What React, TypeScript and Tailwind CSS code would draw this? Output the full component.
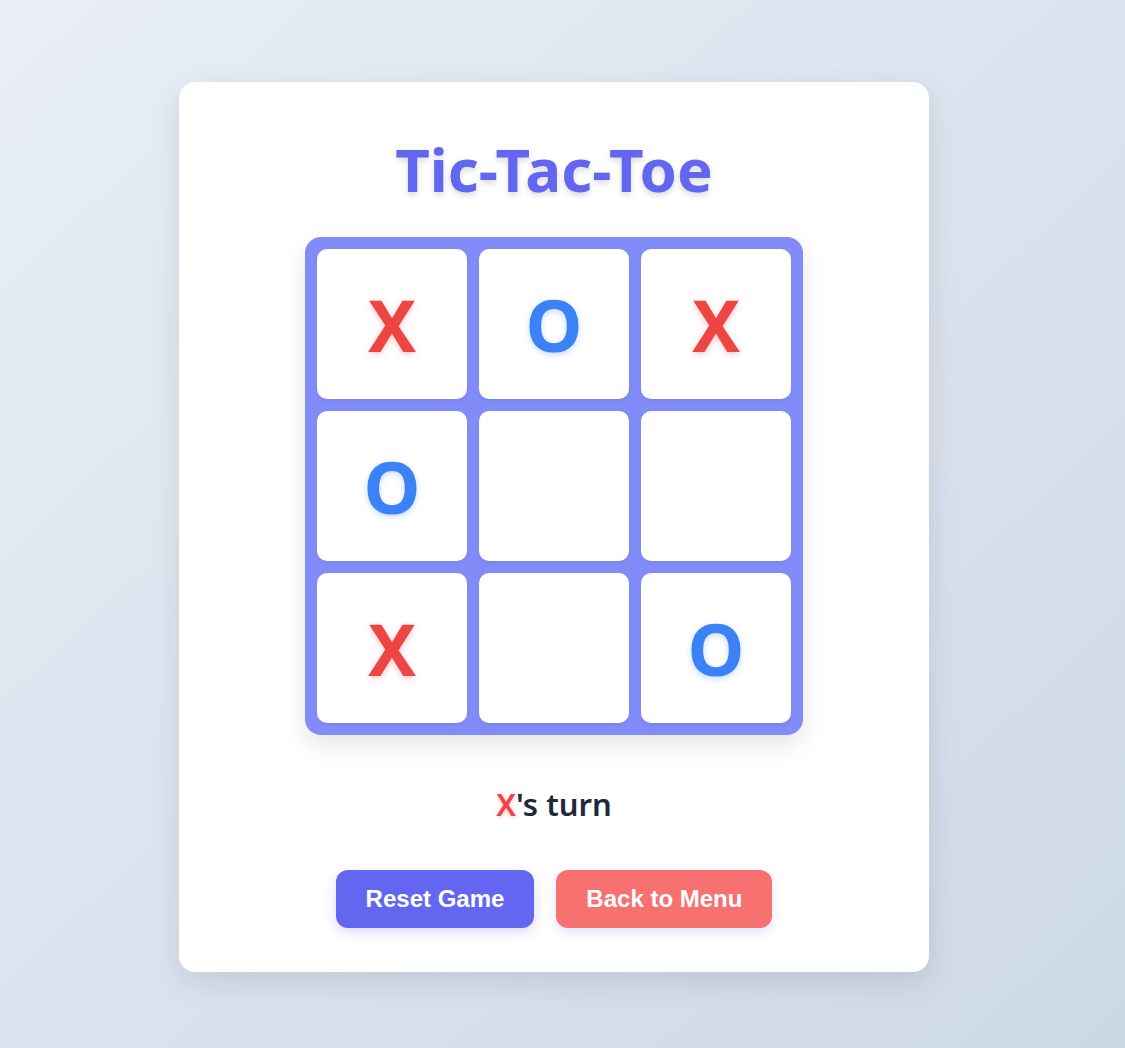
import React, { useState } from 'react';

type Mark = 'X' | 'O' | null;

const START: Mark[] = ['X', 'O', 'X', 'O', null, null, 'X', null, 'O'];

function Cell({ value, onClick }: { value: Mark; onClick: () => void }) {
  return (
    <button
      onClick={onClick}
      className="w-[150px] h-[150px] bg-white rounded-[10px] flex items-center justify-center shadow-[0_2px_4px_rgba(0,0,0,0.06)]"
    >
      {value === 'X' && (
        <span className="text-[72px] leading-none font-bold text-[#ef4444] [text-shadow:0_2px_6px_rgba(239,68,68,0.3)]">
          X
        </span>
      )}
      {value === 'O' && (
        <span className="text-[72px] leading-none font-bold text-[#3b82f6] [text-shadow:0_2px_6px_rgba(59,130,246,0.3)]">
          O
        </span>
      )}
    </button>
  );
}

export default function App() {
  const [board, setBoard] = useState<Mark[]>(START);
  const [turn, setTurn] = useState<'X' | 'O'>('X');

  const handleClick = (i: number) => {
    if (board[i]) return;
    const next = [...board];
    next[i] = turn;
    setBoard(next);
    setTurn(turn === 'X' ? 'O' : 'X');
  };

  const reset = () => {
    setBoard(Array(9).fill(null));
    setTurn('X');
  };

  return (
    <div
      className="min-h-[1048px] bg-linear-to-br from-[#e9eef6] to-[#cdd8e7] pt-[82px] pr-[17px] flex justify-center items-start"
      style={{ fontFamily: '"Noto Sans", "Open Sans", sans-serif' }}
    >
      <div className="w-[750px] bg-white rounded-2xl shadow-[0_10px_30px_rgba(0,0,0,0.1)] pt-[57px] pb-[44px] flex flex-col items-center">
        <h1 className="text-[60px] leading-none font-bold text-[#6366f1] [text-shadow:0_3px_6px_rgba(0,0,0,0.15)] mb-[38px]">
          Tic-Tac-Toe
        </h1>

        <div className="bg-[#818cf8] rounded-2xl p-3 grid grid-cols-3 gap-3 shadow-[0_10px_25px_rgba(0,0,0,0.1)]">
          {board.map((v, i) => (
            <Cell key={i} value={v} onClick={() => handleClick(i)} />
          ))}
        </div>

        <p className="mt-[54px] text-[31px] leading-none font-semibold text-[#1e293b]">
          <span
            className={
              turn === 'X'
                ? 'text-[#ef4444] [text-shadow:0_1px_4px_rgba(239,68,68,0.35)]'
                : 'text-[#3b82f6] [text-shadow:0_1px_4px_rgba(59,130,246,0.35)]'
            }
          >
            {turn}
          </span>
          's turn
        </p>

        <div
          className="mt-[50px] flex gap-[22px]"
          style={{ fontFamily: '"Liberation Sans", Arial, sans-serif' }}
        >
          <button
            onClick={reset}
            className="h-[58px] px-[30px] rounded-xl bg-[#6366f1] text-white text-[24px] font-bold shadow-[0_4px_12px_rgba(99,102,241,0.25)]"
          >
            Reset Game
          </button>
          <button className="h-[58px] px-[30px] rounded-xl bg-[#f87171] text-white text-[24px] font-bold shadow-[0_4px_12px_rgba(99,102,241,0.2)]">
            Back to Menu
          </button>
        </div>
      </div>
    </div>
  );
}
